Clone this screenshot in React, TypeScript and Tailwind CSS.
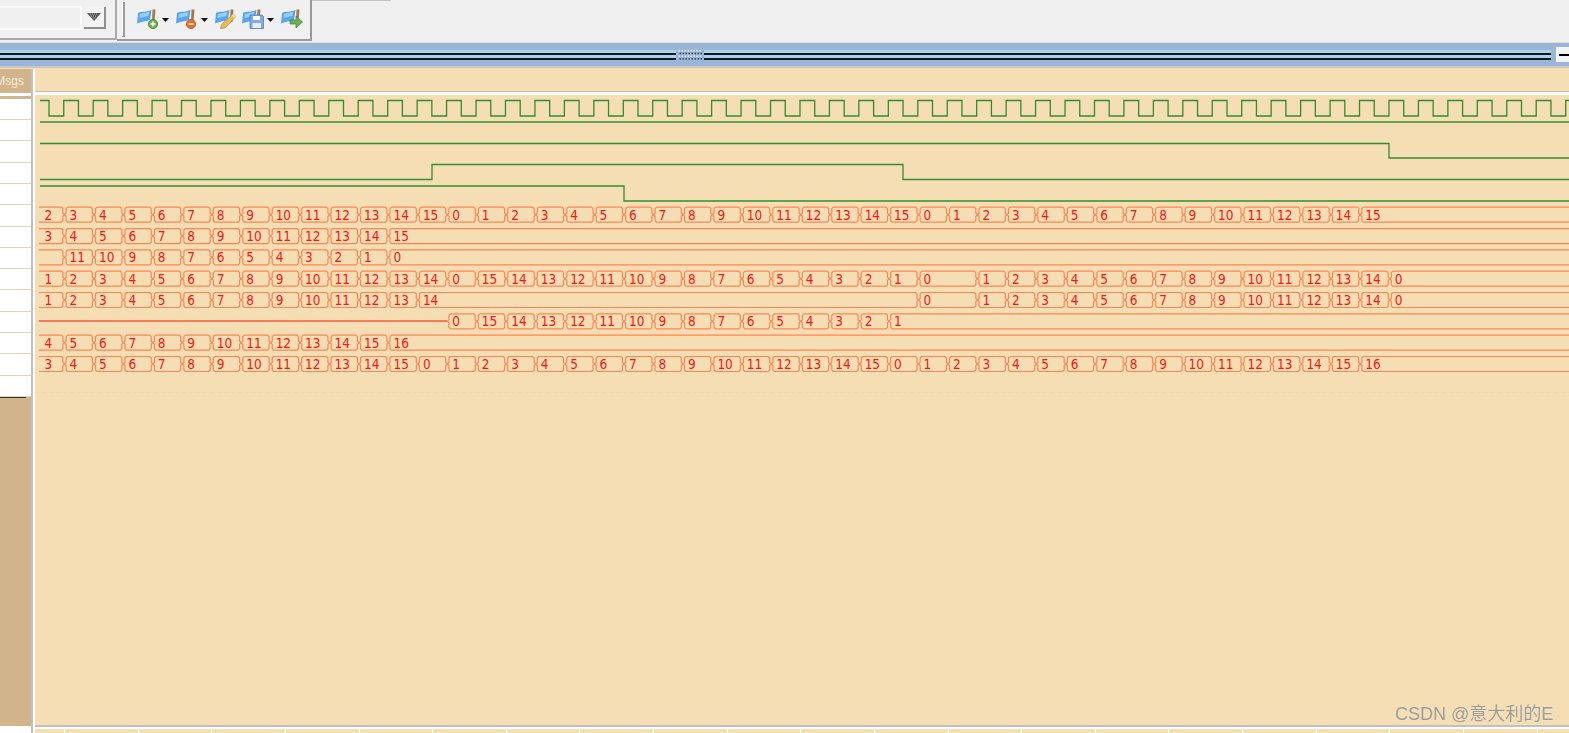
const T0 = 64.5;
const PERIOD = 29.45;
const WAVE_RIGHT = 1569;
const tx = (n: number) => T0 + PERIOD * n;

type Seg = [number, string];

// consecutive values: first value sits at cycle n
const run = (n: number, from: number, to: number): Seg[] => {
  const out: Seg[] = [];
  const step = from <= to ? 1 : -1;
  for (let v = from, i = n; step > 0 ? v <= to : v >= to; v += step, i++) out.push([i, String(v)]);
  return out;
};

const busRows: Seg[][] = [
  [...run(-1, 2, 15), ...run(13, 0, 15), ...run(29, 0, 15)],
  run(-1, 3, 15),
  [[-1, ''], ...run(0, 11, 0)],
  [...run(-1, 1, 14), [13, '0'], ...run(14, 15, 1), [29, '0'], ...run(31, 1, 14), [45, '0']],
  [...run(-1, 1, 14), [29, '0'], ...run(31, 1, 14), [45, '0']],
  [[13, '0'], ...run(14, 15, 1)],
  run(-1, 4, 16),
  [...run(-1, 3, 15), [12, '0'], ...run(13, 1, 15), [28, '0'], ...run(29, 1, 16)],
];

function clockPath() {
  let d = 'M40 100.5 H49';
  let low = true;
  for (let x = 49; x < WAVE_RIGHT; x += PERIOD / 2) {
    const next = x + PERIOD / 2;
    d += low ? ` V116 H${next.toFixed(2)}` : ` V100.5 H${next.toFixed(2)}`;
    low = !low;
  }
  return d;
}

function BusRow({ segs, top }: { segs: Seg[]; top: number }) {
  const bot = top + 15;
  const mid = top + 7.5;
  return (
    <g>
      {segs.map(([n, label], i) => {
        const open = i === segs.length - 1;
        const first = n === -1;
        const a = first ? 39 : tx(n);
        const b = open ? WAVE_RIGHT + 5 : tx(segs[i + 1][0]);
        const left = first ? `M${a} ${top}` : `M${a + 3} ${top}`;
        const right = open
          ? `H${b} M${b} ${bot}`
          : `H${b - 3} L${b - 1.6} ${top + 1.5} V${mid - 1.5} L${b} ${mid} L${b - 1.6} ${mid + 1.5} V${bot - 1.5} L${b - 3} ${bot}`;
        const close = first
          ? `H${a}`
          : `H${a + 3} L${a + 1.6} ${bot - 1.5} V${mid + 1.5} L${a} ${mid} L${a + 1.6} ${mid - 1.5} V${top + 1.5} L${a + 3} ${top}`;
        return (
          <g key={n}>
            <path d={`${left} ${right} ${close}`} fill="none" stroke="#ff8558" strokeWidth="1.2" />
            <text x={first ? 44.5 : a + 5} y={top + 12.4} fill="#ff1414" className="text-[13.5px] font-stretch-condensed font-['DejaVu_Sans',sans-serif]">
              {label}
            </text>
          </g>
        );
      })}
    </g>
  );
}

function Waves() {
  return (
    <svg viewBox="35 95 1534 630" className="block w-full h-[630px]">
      <g fill="none" stroke="#2f8f2f" strokeWidth="1.3">
        <path d={clockPath()} />
        <path d="M40 122 H1569" />
        <path d="M40 143.5 H1389 V158 H1569" />
        <path d="M40 179.5 H432 V164.5 H903 V179.5 H1569" />
        <path d="M40 186 H624 V201 H1569" />
      </g>
      <path d="M39 321 H447" stroke="#f9573f" strokeWidth="1.6" />
      {busRows.map((segs, i) => (
        <BusRow key={i} segs={segs} top={207.2 + i * 21.33} />
      ))}
      <path d="M35 392.5 H1569" stroke="#f0d9b0" strokeWidth="1" strokeDasharray="4 3" />
    </svg>
  );
}

function Flag() {
  return (
    <g>
      <path d="M1 4 C4 2 7 3 9 2.5 C11 2 13 1.5 14.5 1 L13 11 C11 12 8 12 6.5 12.5 C4 13 2 14 0 14.5 Z" fill="#5aa6ee" />
      <path d="M3 5 C6 4 9 4 12 3 L11.5 7 C8 8 5 8 2.5 9 Z" fill="#98cef7" />
      <path d="M15.5 0.5 L18.5 0.5 L17.5 13 L15 13 Z" fill="#a8784a" />
    </g>
  );
}

function Drop() {
  return (
    <svg width="7" height="4" viewBox="0 0 7 4" className="mt-[3px] ml-[3px]">
      <path d="M0 0 H7 L3.5 4 Z" fill="#111" />
    </svg>
  );
}

function ToolIcon({ kind }: { kind: 'add' | 'remove' | 'edit' | 'save' | 'go' }) {
  return (
    <svg width="22" height="21" viewBox="0 0 22 21" className="block">
      <g transform="translate(0 1)">
        <Flag />
      </g>
      {kind === 'add' && (
        <g>
          <circle cx="16" cy="16" r="4.6" fill="#6fb055" stroke="#3d7d2e" strokeWidth="0.8" />
          <path d="M13.5 16 H18.5 M16 13.5 V18.5" stroke="#fff" strokeWidth="1.4" />
        </g>
      )}
      {kind === 'remove' && (
        <g>
          <circle cx="15" cy="16" r="4.6" fill="#e8702a" stroke="#c05418" strokeWidth="0.8" />
          <path d="M12.5 16 H17.5" stroke="#fff" strokeWidth="1.4" />
        </g>
      )}
      {kind === 'edit' && (
        <g>
          <path d="M18 6 L21 8.5 L10 20 L5.5 20.5 L7 16 Z" fill="#e8bc50" stroke="#b98a2a" strokeWidth="0.7" />
          <path d="M18 6 L21 8.5 L19.5 10 L16.5 7.5 Z" fill="#f3dfb0" />
        </g>
      )}
      {kind === 'save' && (
        <g>
          <path d="M8 7 H20 L21.5 8.5 V20.5 H8 Z" fill="#7fa9e8" stroke="#4672b8" strokeWidth="0.7" />
          <rect x="11" y="8" width="7" height="4" fill="#fff" />
          <rect x="10.5" y="15" width="8.5" height="5" fill="#e4edf8" />
        </g>
      )}
      {kind === 'go' && <path d="M9 12 H15 V8 L21.5 14 L15 20 V16 H9 Z" fill="#6fae58" stroke="#447f33" strokeWidth="0.7" />}
    </svg>
  );
}

function Toolbar() {
  return (
    <div className="h-[43px] bg-[#f0f0f0] flex border-b border-[#dcdcdc] overflow-hidden">
      <div className="w-[117px] h-[40px] shrink-0 border-r-2 border-b-2 border-[#a9a9a9] pt-[6px] flex">
        <div className="w-[82px] h-[24px] border-t-2 border-r-2 border-b-2 border-[#fafafa]" />
        <div className="ml-[2px] mt-px w-[22px] h-[22px] bg-[#f3f3f3] border-r-2 border-b-2 border-[#8f8f8f] flex items-center justify-center">
          <svg width="14" height="8" viewBox="0 0 14 8">
            <path d="M0 0 H14 L7 8 Z" fill="#555" />
            <path d="M3 1 H11 M4 3 H10 M5.5 5 H8.5" stroke="#ddd" strokeWidth="0.8" strokeDasharray="1 1" />
          </svg>
        </div>
      </div>
      <div className="w-[195px] h-[41px] shrink-0 border-r-2 border-b-2 border-[#9a9a9a] flex items-start">
        <div className="w-[3px] h-[35px] mt-[2px] ml-[5px] border-r-2 border-b border-[#9c9c9c] bg-white" />
        <div className="ml-[12px] mt-[8px] flex items-start">
          <ToolIcon kind="add" />
          <div className="pt-[7px] mr-[7px]"><Drop /></div>
          <ToolIcon kind="remove" />
          <div className="pt-[7px] mr-[7px]"><Drop /></div>
          <div className="mr-[5px]"><ToolIcon kind="edit" /></div>
          <ToolIcon kind="save" />
          <div className="pt-[7px] mr-[7px]"><Drop /></div>
          <ToolIcon kind="go" />
        </div>
      </div>
      <div className="w-[79px] h-px shrink-0 bg-[#c4c4c4]" />
    </div>
  );
}

function GripLines({ className }: { className: string }) {
  return (
    <div className={className}>
      <div className="h-[3px] bg-[#add2ec]" />
      <div className="h-[2px] bg-[#101820]" />
      <div className="h-[3px] bg-[#add2ec]" />
      <div className="h-[2px] bg-[#101820]" />
    </div>
  );
}

function Splitter() {
  return (
    <div className="h-[25px] bg-[#9ab5d5] flex items-start border-b-2 border-[#c8c8c8] relative">
      <div className="mt-[7px] flex flex-1 items-start">
        <GripLines className="w-[676px] shrink-0 flex flex-col" />
        <svg width="26" height="12" viewBox="0 0 26 12" className="-mt-px mx-[1px] shrink-0">
          {[0, 1, 2, 3].map((r) =>
            [0, 1, 2, 3, 4, 5, 6, 7].map((c) => (
              <rect key={`${r}-${c}`} x={1.5 + c * 3 + (r % 2)} y={1 + r * 2.7} width="1.5" height="1.5" fill={r % 2 ? '#33465e' : '#e8f0f8'} />
            )),
          )}
        </svg>
        <GripLines className="flex-1 flex flex-col" />
      </div>
      <div className="w-[13px] h-[15px] ml-[5px] mt-[4px] bg-[#f4f4f4] flex items-center pl-[3px] shrink-0">
        <div className="w-full h-[2px] bg-black" />
      </div>
    </div>
  );
}

function Sidebar() {
  return (
    <div className="w-[31px] shrink-0 flex flex-col bg-[#d2b48c] overflow-hidden">
      <div className="h-[24px] flex items-center justify-end pr-[7px]">
        <span className="text-[12px] text-[#f6ead8] font-['Liberation_Sans',sans-serif] whitespace-nowrap">Msgs</span>
      </div>
      <div className="h-[3px] bg-white" />
      <div className="h-[3px]" />
      <div className="bg-white h-[298px] flex flex-col">
        {Array.from({ length: 14 }).map((_, i) => (
          <div key={i} className={i === 0 ? 'h-[21px] border-b border-[#e3d2b8]' : 'h-[21.33px] border-b border-[#e3d2b8]'} />
        ))}
      </div>
      <div className="h-px w-[26px] bg-[#333]" />
    </div>
  );
}

export default function App() {
  return (
    <div className="w-[1569px] h-[733px] overflow-hidden bg-white flex flex-col relative">
      <Toolbar />
      <Splitter />
      <div className="h-px bg-[#f5deb3]" />
      <div className="flex-1 flex min-h-0">
        <div className="flex flex-col w-[31px] shrink-0">
          <div className="h-[657px] flex">
            <Sidebar />
          </div>
        </div>
        <div className="w-[2px] bg-[#c0c0c0] shrink-0" />
        <div className="w-[2px] bg-white shrink-0" />
        <div className="flex-1 flex flex-col min-w-0">
          <div className="h-[23px] bg-[#f5deb3] border-b border-[#c4bcae]" />
          <div className="h-[3px] bg-white" />
          <div className="bg-[#f5deb3]">
            <Waves />
          </div>
          <div className="h-[2px] bg-[#c0c0c0]" />
          <div className="h-[2px] bg-white" />
          <div className="flex-1 flex bg-white gap-px overflow-hidden">
            <div className="w-[29px] shrink-0 bg-[#f5deb3]" />
            {Array.from({ length: 21 }).map((_, i) => (
              <div key={i} className="w-[72.63px] shrink-0 bg-[#f5deb3]" />
            ))}
          </div>
        </div>
      </div>
      <div className="absolute left-[1395px] top-[702px] text-[18px] leading-[24px] text-[#a09a8e] [text-shadow:0_0_1px_#fff] font-['Liberation_Sans','Noto_Sans_CJK_SC',sans-serif] whitespace-nowrap">
        CSDN @意大利的E
      </div>
    </div>
  );
}
